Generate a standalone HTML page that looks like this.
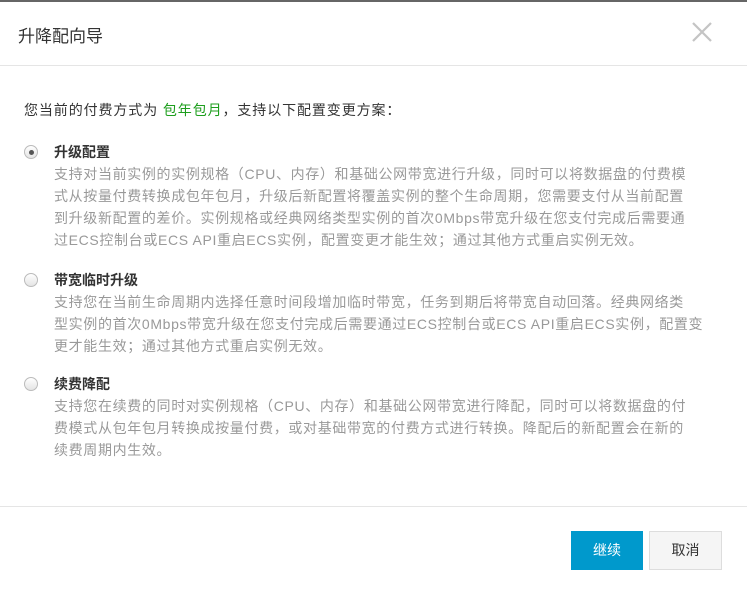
<!DOCTYPE html>
<html><head><meta charset="utf-8"><style>
body{margin:0;width:747px;height:594px;background:#fff;font-family:"Liberation Sans","Noto Sans CJK SC",sans-serif;position:relative;overflow:hidden;}
.top{position:absolute;left:0;top:0;width:747px;height:2px;background:#666;}
.title{position:absolute;left:18px;top:22px;font-size:17px;color:#333;}
.x{position:absolute;left:690px;top:20px;}
.hr{position:absolute;left:0;width:747px;height:1px;background:#e5e5e5;}
.intro{position:absolute;left:24px;top:100px;font-size:14px;color:#333;letter-spacing:0.9px;}
.g{color:#1d9e1d;}
.opt{position:absolute;left:24px;}
.radio{position:absolute;left:0;top:4px;width:14px;height:14px;border-radius:50%;border:1px solid #bbb;background:linear-gradient(#fff,#e4e4e4);box-sizing:border-box;}
.radio.on::after{content:"";position:absolute;left:3.5px;top:3.5px;width:5px;height:5px;border-radius:50%;background:#555;}
.opt h4{margin:0 0 0 30px;font-size:14px;font-weight:bold;color:#333;line-height:22px;}
.opt p{margin:0 0 0 30px;width:720px;white-space:nowrap;font-size:14px;color:#999;line-height:22px;letter-spacing:0.65px;}
.btn{position:absolute;top:531px;height:39px;width:72px;box-sizing:border-box;font-size:14px;text-align:center;line-height:39px;}
</style></head><body>
<div class="top"></div>
<div class="title">升降配向导</div>
<svg class="x" width="24" height="24" viewBox="0 0 24 24"><path d="M3 3L21 21M21 3L3 21" stroke="#c4c4c4" stroke-width="2.2"/></svg>
<div class="hr" style="top:65px"></div>
<div class="intro">您当前的付费方式为 <span class="g">包年包月</span>，支持以下配置变更方案：</div>
<div class="opt" style="top:141px"><div class="radio on"></div><h4>升级配置</h4><p>支持对当前实例的实例规格（CPU、内存）和基础公网带宽进行升级，同时可以将数据盘的付费模<br>式从按量付费转换成包年包月，升级后新配置将覆盖实例的整个生命周期，您需要支付从当前配置<br>到升级新配置的差价。实例规格或经典网络类型实例的首次0Mbps带宽升级在您支付完成后需要通<br>过ECS控制台或ECS API重启ECS实例，配置变更才能生效；通过其他方式重启实例无效。</p></div>
<div class="opt" style="top:269px"><div class="radio"></div><h4>带宽临时升级</h4><p>支持您在当前生命周期内选择任意时间段增加临时带宽，任务到期后将带宽自动回落。经典网络类<br>型实例的首次0Mbps带宽升级在您支付完成后需要通过ECS控制台或ECS API重启ECS实例，配置变<br>更才能生效；通过其他方式重启实例无效。</p></div>
<div class="opt" style="top:373px"><div class="radio"></div><h4>续费降配</h4><p>支持您在续费的同时对实例规格（CPU、内存）和基础公网带宽进行降配，同时可以将数据盘的付<br>费模式从包年包月转换成按量付费，或对基础带宽的付费方式进行转换。降配后的新配置会在新的<br>续费周期内生效。</p></div>
<div class="hr" style="top:506px"></div>
<div class="btn" style="left:571px;background:#0099cc;color:#fff;">继续</div>
<div class="btn" style="left:649px;width:73px;background:#f5f5f5;border:1px solid #ddd;color:#333;line-height:37px;">取消</div>
</body></html>
